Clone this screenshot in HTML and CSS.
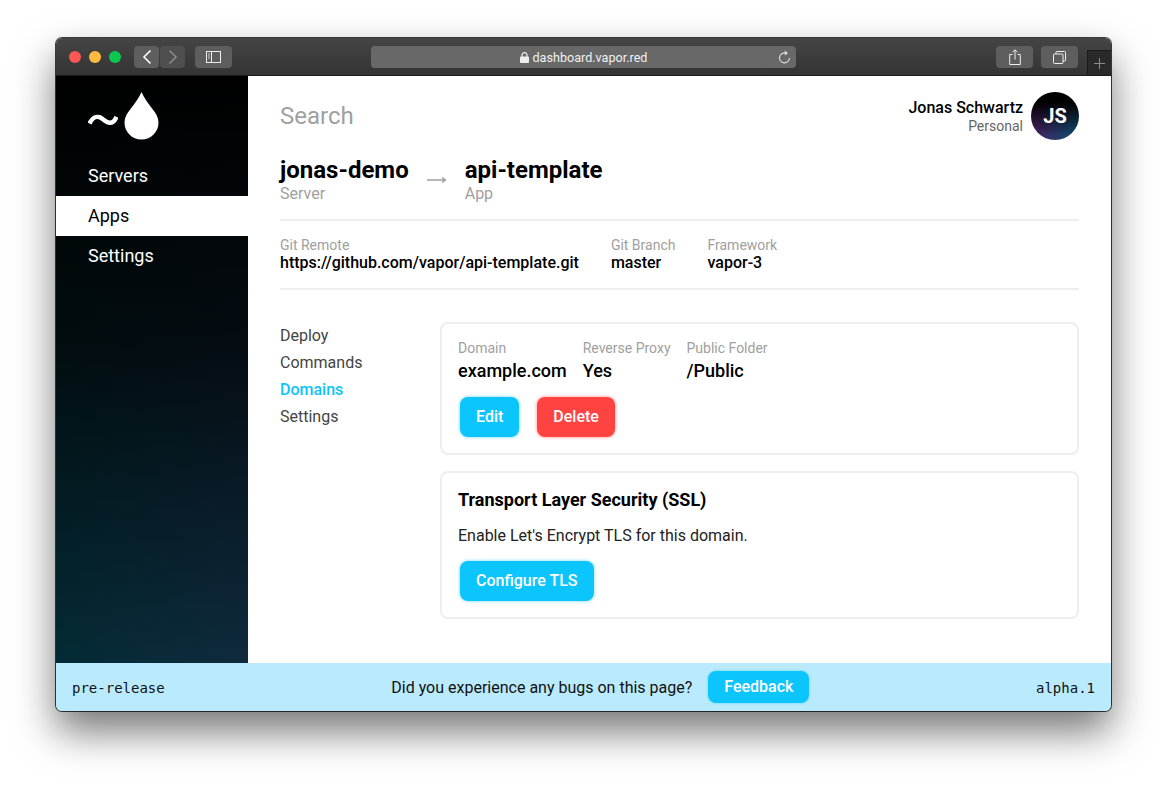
FILE: index.html
```html
<!DOCTYPE html>
<html lang="en">
<head>
    <meta charset="UTF-8">
    <meta name="viewport" content="width=device-width, initial-scale=1.0">
    <title>Vapor Dashboard</title>
    <link rel="stylesheet" href="styles.css">
</head>
<body>
    <div class="window">
        <!-- browser toolbar -->
        <div class="toolbar">
            <div class="lights">
                <span class="light red"></span>
                <span class="light yellow"></span>
                <span class="light green"></span>
            </div>
            <div class="nav-btns">
                <div class="tool-btn small">
                    <svg width="10" height="16" viewBox="0 0 10 16"><path d="M8.5 1.5 2 8l6.5 6.5" fill="none" stroke="#fff" stroke-width="1.6"/></svg>
                </div>
                <div class="tool-btn small dim">
                    <svg width="10" height="16" viewBox="0 0 10 16"><path d="M1.5 1.5 8 8l-6.5 6.5" fill="none" stroke="#8a8a8a" stroke-width="1.6"/></svg>
                </div>
            </div>
            <div class="tool-btn wide side-btn">
                <svg width="15" height="12" viewBox="0 0 15 12"><rect x=".5" y=".5" width="14" height="11" fill="none" stroke="#eee"/><path d="M5.5 .5v11" stroke="#eee"/><path d="M2 3h2M2 5h2M2 7h2" stroke="#ccc"/></svg>
            </div>
            <div class="address">
                <span class="address-text">
                    <svg width="9" height="11" viewBox="0 0 9 11"><path d="M2 5V3.2a2.5 2.5 0 0 1 5 0V5" fill="none" stroke="#eee" stroke-width="1.2"/><rect y="4.6" width="9" height="6.4" rx="1" fill="#eee"/></svg>
                    dashboard.vapor.red
                </span>
                <svg class="reload" width="13" height="14" viewBox="0 0 13 14"><path d="M8.2 3.2A5 5 0 1 0 11.5 8" fill="none" stroke="#ddd" stroke-width="1.1"/><path d="M6.8.6 10 3.2 6.8 5.6z" fill="#ddd"/></svg>
            </div>
            <div class="tool-btn wide share-btn">
                <svg width="12" height="16" viewBox="0 0 12 16"><path d="M3.5 5.5H.7v10h10.6v-10H8.5" fill="none" stroke="#eee"/><path d="M6 10.5V1M3.5 3.2 6 .8l2.5 2.4" fill="none" stroke="#eee"/></svg>
            </div>
            <div class="tool-btn wide">
                <svg width="13" height="13" viewBox="0 0 13 13"><rect x=".5" y="3" width="9.5" height="9.5" rx="1" fill="none" stroke="#eee"/><path d="M3 3V1.5a1 1 0 0 1 1-1h7.5a1 1 0 0 1 1 1V9a1 1 0 0 1-1 1H10" fill="none" stroke="#eee"/></svg>
            </div>
            <div class="new-tab">
                <svg width="11" height="11" viewBox="0 0 11 11"><path d="M5.5 0v11M0 5.5h11" stroke="#8c8c8c"/></svg>
            </div>
        </div>

        <div class="content">
            <div class="sidebar">
                <div class="logo">
                    <svg class="tilde" width="30" height="14" viewBox="0 0 30 14"><path d="M1.5 10.500C4 5.500 8 3 11.500 4.200 15 5.500 18 9.800 22 9.800c3 0 5-2.500 6.500-6" fill="none" stroke="#fff" stroke-width="4.500"/></svg>
                    <svg width="35" height="48" viewBox="0 0 35 48"><path d="M17.5 0C20 6 24 11 28.5 17 32 21.500 34.500 25.500 34.500 30.500 34.500 40 27 47.500 17.500 47.500S.5 40 .5 30.500C.5 25.500 3 21.500 6.500 17 11 11 15 6 17.500 0z" fill="#fff"/></svg>
                </div>
                <a class="side-link">Servers</a>
                <a class="side-link active">Apps</a>
                <a class="side-link">Settings</a>
            </div>

            <div class="main">
                <div class="top">
                    <div class="search">Search</div>
                    <div class="user">
                        <div class="user-text">
                            <div class="user-name">Jonas Schwartz</div>
                            <div class="user-sub">Personal</div>
                        </div>
                        <div class="avatar">JS</div>
                    </div>
                </div>

                <div class="crumbs">
                    <div class="crumb">
                        <div class="crumb-name">jonas-demo</div>
                        <div class="crumb-sub">Server</div>
                    </div>
                    <svg class="arrow" width="20" height="10" viewBox="0 0 20 10"><path d="M0 5h18M15 2.5 18.5 5 15 7.5" fill="none" stroke="#a0a0a0" stroke-width="1.4"/></svg>
                    <div class="crumb">
                        <div class="crumb-name">api-template</div>
                        <div class="crumb-sub">App</div>
                    </div>
                </div>

                <div class="info">
                    <div class="field">
                        <div class="label">Git Remote</div>
                        <div class="value">https://github.com/vapor/api-template.git</div>
                    </div>
                    <div class="field">
                        <div class="label">Git Branch</div>
                        <div class="value">master</div>
                    </div>
                    <div class="field">
                        <div class="label">Framework</div>
                        <div class="value">vapor-3</div>
                    </div>
                </div>

                <div class="detail">
                    <div class="subnav">
                        <a>Deploy</a>
                        <a>Commands</a>
                        <a class="current">Domains</a>
                        <a>Settings</a>
                    </div>
                    <div class="cards">
                        <div class="card">
                            <div class="fields">
                                <div class="field">
                                    <div class="label">Domain</div>
                                    <div class="value big">example.com</div>
                                </div>
                                <div class="field">
                                    <div class="label">Reverse Proxy</div>
                                    <div class="value big">Yes</div>
                                </div>
                                <div class="field">
                                    <div class="label">Public Folder</div>
                                    <div class="value big">/Public</div>
                                </div>
                            </div>
                            <div class="actions">
                                <a class="btn">Edit</a>
                                <a class="btn danger">Delete</a>
                            </div>
                        </div>
                        <div class="card">
                            <div class="card-title">Transport Layer Security (SSL)</div>
                            <div class="card-text">Enable Let's Encrypt TLS for this domain.</div>
                            <div class="actions">
                                <a class="btn">Configure TLS</a>
                            </div>
                        </div>
                    </div>
                </div>
            </div>
        </div>

        <div class="footer">
            <span class="mono">pre-release</span>
            <div class="feedback">
                <span>Did you experience any bugs on this page?</span>
                <a class="btn slim">Feedback</a>
            </div>
            <span class="mono">alpha.1</span>
        </div>
    </div>
</body>
</html>
```

FILE: styles.css
```css
*{
    margin: 0;
    padding: 0;
    box-sizing: border-box;
}
html, body{
    height: 100%;
    overflow: hidden;
}
body{
    background-color: #fff;
    font-family: Roboto, "Liberation Sans", sans-serif;
    color: #000;
}
.window{
    width: 1055px;
    height: 673px;
    margin: 38px 0 0 56px;
    display: flex;
    flex-direction: column;
    border-radius: 6px;
    overflow: hidden;
    box-shadow: 0 0 0 1px rgba(0,0,0,.75), 0 20px 40px rgba(0,0,0,.55);
}

/* toolbar */
.toolbar{
    height: 38px;
    flex: none;
    display: flex;
    align-items: flex-start;
    padding: 8px 0 0 13px;
    background: linear-gradient(#454545, #343434);
    border-bottom: 1px solid #1c1c1c;
}
.lights{
    display: flex;
    gap: 8px;
    margin-top: 5px;
}
.light{
    width: 12px;
    height: 12px;
    border-radius: 50%;
}
.red{ background-color: #fc5753; }
.yellow{ background-color: #fdbc40; }
.green{ background-color: #0bc74f; }
.nav-btns{
    display: flex;
    gap: 1px;
    margin-left: 13px;
}
.tool-btn{
    height: 22px;
    border-radius: 4px;
    background-color: #5e5e5e;
    display: flex;
    align-items: center;
    justify-content: center;
}
.small{ width: 25px; }
.dim{ background-color: #4f4f4f; }
.wide{ width: 37px; }
.side-btn{ margin-left: 10px; }
.address{
    width: 425px;
    height: 22px;
    margin-left: 139px;
    border-radius: 4px;
    background-color: #686868;
    display: flex;
    align-items: center;
    position: relative;
    justify-content: center;
}
.address-text{
    display: flex;
    align-items: center;
    gap: 4px;
    font-size: 12.6px;
    color: #f0f0f0;
}
.reload{
    position: absolute;
    right: 5px;
    top: 4px;
}
.share-btn{
    margin: 0 8px 0 200px;
}
.new-tab{
    width: 24px;
    height: 26px;
    margin: 4px 0 0 9px;
    background-color: #2a2a2a;
    border: 1px solid #1a1a1a;
    border-right: 0;
    display: flex;
    align-items: center;
    justify-content: center;
}

.content{
    flex: 1;
    display: flex;
    min-height: 0;
}

/* sidebar */
.sidebar{
    width: 192px;
    flex: none;
    background: linear-gradient(#000 0%, rgba(0,0,0,.72) 45%, rgba(0,0,0,0) 100%), linear-gradient(to right, #032b35, #0f2a3e);
    padding-top: 16px;
}
.logo{
    display: flex;
    align-items: center;
    height: 48px;
    margin: 0 0 16px 32px;
    gap: 6px;
}
.tilde{
    margin-top: 8px;
}
.side-link{
    display: block;
    height: 40px;
    line-height: 40px;
    padding-left: 32px;
    font-size: 18px;
    color: #fff;
}
.side-link.active{
    background-color: #fff;
    color: #000;
}

/* main area */
.main{
    flex: 1;
    background-color: #fff;
    padding: 16px 32px 0;
}
.top{
    display: flex;
    justify-content: space-between;
    align-items: center;
    height: 48px;
}
.search{
    font-size: 24px;
    color: #a0a0a0;
}
.user{
    display: flex;
    align-items: center;
    gap: 8px;
    text-align: right;
}
.user-text{
    margin-top: 2px;
}
.user-name{
    font-size: 16px;
    font-weight: 500;
    line-height: 18px;
}
.user-sub{
    font-size: 14px;
    color: #666;
    line-height: 18px;
}
.avatar{
    width: 48px;
    height: 48px;
    border-radius: 50%;
    background: linear-gradient(#000 20%, rgba(0,0,0,0) 90%), linear-gradient(100deg, #4c1c5e 10%, #0e4a6c 90%);
    color: #fff;
    font-size: 20px;
    font-weight: 700;
    display: flex;
    align-items: center;
    justify-content: center;
}

.crumbs{
    display: flex;
    align-items: flex-start;
    margin-top: 14px;
    padding-bottom: 17px;
    border-bottom: 2px solid #eee;
}
.crumb-name{
    font-size: 24px;
    font-weight: 700;
    line-height: 32px;
}
.crumb-sub{
    font-size: 16px;
    color: #a0a0a0;
    line-height: 16px;
}
.arrow{
    margin: 21px 18px 0;
}

.info{
    display: flex;
    gap: 32px;
    padding: 15px 0 16px;
    border-bottom: 2px solid #eee;
}
.label{
    font-size: 14px;
    color: #a0a0a0;
    line-height: 18px;
}
.value{
    font-size: 16px;
    font-weight: 500;
    line-height: 18px;
}
.value.big{
    font-size: 18px;
    line-height: 26px;
    margin-top: 1px;
}

.detail{
    display: flex;
    margin-top: 32px;
}
.subnav{
    width: 160px;
    flex: none;
}
.subnav a{
    display: block;
    font-size: 16px;
    line-height: 27px;
    color: #444;
}
.subnav a.current{
    color: #0bc4fb;
    font-weight: 500;
}
.cards{
    flex: 1;
    display: flex;
    flex-direction: column;
    gap: 16px;
}
.card{
    border: 2px solid #eee;
    border-radius: 8px;
    padding: 15px 16px 16px;
}
.fields{
    display: flex;
    gap: 16px;
}
.actions{
    display: flex;
    gap: 18px;
    margin: 13px 0 0 2px;
}
.btn{
    display: block;
    height: 40px;
    line-height: 40px;
    padding: 0 16px;
    border-radius: 8px;
    background-color: #0dc5fd;
    box-shadow: 0 0 3px 1px #a8e6fc;
    color: #fff;
    font-size: 16px;
    font-weight: 500;
}
.btn.danger{
    background-color: #ff4340;
    box-shadow: 0 0 3px 1px #ffb8b6;
}
.btn.slim{
    height: 32px;
    line-height: 32px;
    box-shadow: 0 0 2px 1px #8fdffa;
}
.card-title{
    font-size: 18px;
    font-weight: 700;
    line-height: 24px;
}
.card-text{
    font-size: 16px;
    line-height: 24px;
    margin-top: 12px;
    color: #222;
}
.card-text + .actions{
    margin-top: 13px;
}

/* footer */
.footer{
    height: 48px;
    flex: none;
    display: flex;
    align-items: center;
    justify-content: space-between;
    padding: 0 16px;
    background-color: #baeafd;
}
.mono{
    font-family: "DejaVu Sans Mono", monospace;
    font-size: 14px;
    color: #111;
    margin-top: 2px;
}
.feedback{
    display: flex;
    align-items: center;
    gap: 16px;
    font-size: 16px;
    color: #111;
}
```
